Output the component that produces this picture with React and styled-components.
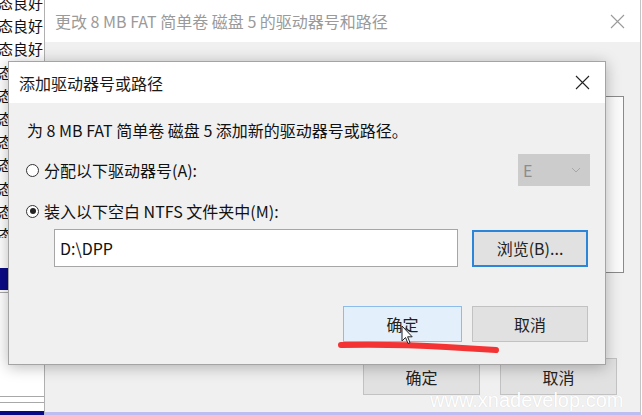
import React from 'react';
import styled, { createGlobalStyle } from 'styled-components';

const GlobalStyle = createGlobalStyle`
  html, body {
    margin: 0;
    padding: 0;
    background: #ffffff;
  }
  body {
    font-family: "Noto Sans CJK SC", "Noto Sans", sans-serif;
    color: #111;
  }
`;

// rows above the small dialog show fully, the rest only peek out on its left side
const topRows = Array.from({ length: 3 });
const coveredRows = Array.from({ length: 8 });

const App = () => {
  return (
    <>
      <GlobalStyle />
      <Desktop>
        <DiskList>
          <StatusRows>
            {topRows.map((_, i) => (
              <StatusCell key={i}>状态良好</StatusCell>
            ))}
            <CoveredRows>
              <CoveredInner>
                {coveredRows.map((_, i) => (
                  <StatusCell key={i}>状态良好</StatusCell>
                ))}
              </CoveredInner>
            </CoveredRows>
          </StatusRows>
          <SelectedBar />
          <RowLine />
          <ListFiller />
          <RowLine />
          <RowLine $gap={5} />
          <TaskBar />
        </DiskList>

        <OuterWindow>
          <TitleBar $height={42}>
            <OuterTitle>更改 8 MB FAT 简单卷 磁盘 5 的驱动器号和路径</OuterTitle>
            <CloseIcon color="#9a9a9a" />
          </TitleBar>
          <OuterBody>
            <PathList />
            <ButtonRow $gap={20}>
              <Button $w={117} $h={37}>确定</Button>
              <Button $w={117} $h={37}>取消</Button>
            </ButtonRow>
          </OuterBody>
        </OuterWindow>

        <Dialog>
          <TitleBar $height={41}>
            <DialogTitle>添加驱动器号或路径</DialogTitle>
            <CloseIcon color="#222" />
          </TitleBar>
          <DialogBody>
            <Description>为 8 MB FAT 简单卷 磁盘 5 添加新的驱动器号或路径。</Description>
            <OptionRow $top={13} $h={32}>
              <Radio />
              <OptionLabel>分配以下驱动器号(A):</OptionLabel>
              <DriveSelect>
                <span>E</span>
                <svg width="10" height="6" viewBox="0 0 10 6">
                  <path d="M1 1 L5 5 L9 1" fill="none" stroke="#a8a8a8" strokeWidth="1" />
                </svg>
              </DriveSelect>
            </OptionRow>
            <OptionRow $top={13} $h={24}>
              <Radio $checked />
              <OptionLabel>装入以下空白 NTFS 文件夹中(M):</OptionLabel>
            </OptionRow>
            <PathRow>
              <PathInput>{'D:\\DPP'}</PathInput>
              <Button $w={116} $h={37} $variant="focus">浏览(B)...</Button>
            </PathRow>
            <ButtonRow $gap={10} $top={39}>
              <Button $w={119} $h={36} $variant="hover">确定</Button>
              <Button $w={116} $h={36}>取消</Button>
            </ButtonRow>
          </DialogBody>
        </Dialog>

        <Underline width="170" height="16" viewBox="0 0 170 16">
          <path d="M5 5 Q60 4 110 7 T160 10" fill="none" stroke="#f43434" strokeWidth="6" strokeLinecap="round" />
        </Underline>

        <Cursor width="13" height="20" viewBox="0 0 13 20">
          <path d="M1 1 L1 16 L4.5 12.5 L7 18.5 L9 17.6 L6.6 11.8 L11.2 11.8 Z" fill="#fff" stroke="#222" strokeWidth="1" strokeLinejoin="round" />
        </Cursor>

        <Watermark>www.xnadevelop.com</Watermark>
      </Desktop>
    </>
  );
};

const CloseIcon = ({ color }) => (
  <svg width="15" height="15" viewBox="0 0 15 15">
    <path d="M1 1 L14 14 M14 1 L1 14" stroke={color} strokeWidth="1.1" fill="none" />
  </svg>
);

const Desktop = styled.div`
  position: relative;
  width: 642px;
  height: 415px;
  overflow: hidden;
  display: grid;
  grid-template-columns: 44px 598px;
  background: #ffffff;
`;

const DiskList = styled.div`
  display: flex;
  flex-direction: column;
  overflow: hidden;
  background: #ffffff;
`;

const StatusRows = styled.div`
  display: flex;
  flex-direction: column;
  height: 247px;
  margin-top: -9px;
  overflow: hidden;
`;

const CoveredRows = styled.div`
  width: 8px;
  overflow: hidden;
`;

const CoveredInner = styled.div`
  width: 44px;
  display: flex;
  flex-direction: column;
`;

const StatusCell = styled.div`
  flex: 0 0 23.2px;
  display: flex;
  justify-content: flex-end;
  align-items: center;
  padding-right: 1px;
  overflow: hidden;
  white-space: nowrap;
  font-size: 15px;
  line-height: 23px;
  color: #111;
`;

const SelectedBar = styled.div`
  height: 22px;
  margin-top: 30px;
  background: #0a0a86;
`;

const RowLine = styled.div`
  height: 1px;
  margin-top: ${p => p.$gap || 2}px;
  background: #a8a8a8;
`;

const ListFiller = styled.div`
  height: 101px;
`;

const TaskBar = styled.div`
  height: 4px;
  margin-top: auto;
  background: #0a0a86;
`;

const OuterWindow = styled.div`
  display: flex;
  flex-direction: column;
  box-sizing: border-box;
  height: 415px;
  width: 597px;
  border-left: 1px solid #b0b0b0;
  border-right: 1px solid #c4c4c4;
  border-bottom: 3px solid #bdbdf2;
  background: #f0f0f0;
`;

const TitleBar = styled.div`
  flex: 0 0 ${p => p.$height}px;
  display: flex;
  align-items: center;
  justify-content: space-between;
  padding: 0 15px 0 10px;
  background: #ffffff;
`;

const OuterTitle = styled.span`
  font-size: 16px;
  color: #9a9a9a;
`;

const OuterBody = styled.div`
  flex: 1;
  display: flex;
  flex-direction: column;
  padding-right: 16px;
`;

const PathList = styled.div`
  height: 177px;
  width: 560px;
  margin: 54px 0 0 auto;
  box-sizing: border-box;
  border: 1px solid #8a8a8a;
  background: #fbfbfb;
`;

const ButtonRow = styled.div`
  display: flex;
  justify-content: flex-end;
  gap: ${p => p.$gap}px;
  margin-top: ${p => p.$top || 85}px;
  padding-right: ${p => (p.$top ? 0 : 7)}px;
`;

const buttonColors = {
  normal: { bg: '#e1e1e1', border: '#c2c2c2' },
  focus: { bg: '#e1e1e1', border: '#2b86d9' },
  hover: { bg: '#e3f0fb', border: '#8cbdea' },
};

const Button = styled.div`
  box-sizing: border-box;
  width: ${p => p.$w}px;
  height: ${p => p.$h}px;
  display: flex;
  align-items: center;
  justify-content: center;
  font-size: 16px;
  color: #222;
  background: ${p => buttonColors[p.$variant || 'normal'].bg};
  border: ${p => (p.$variant === 'focus' ? 2 : 1)}px solid ${p => buttonColors[p.$variant || 'normal'].border};
`;

const Dialog = styled.div`
  position: absolute;
  left: 8px;
  top: 61px;
  width: 598px;
  height: 304px;
  box-sizing: border-box;
  display: flex;
  flex-direction: column;
  border: 1px solid #a4a4a4;
  background: #f0f0f0;
  box-shadow: 0 2px 14px rgba(0, 0, 0, 0.28);
`;

const DialogTitle = styled.span`
  font-size: 16px;
  color: #1a1a1a;
`;

const DialogBody = styled.div`
  flex: 1;
  display: flex;
  flex-direction: column;
  padding: 0 17px 0 17px;
`;

const Description = styled.div`
  margin-top: 16px;
  padding-left: 1px;
  font-size: 16px;
  line-height: 22px;
  color: #111;
`;

const OptionRow = styled.div`
  display: flex;
  align-items: center;
  height: ${p => p.$h}px;
  margin-top: ${p => p.$top}px;
`;

const Radio = styled.span`
  position: relative;
  box-sizing: border-box;
  width: 13px;
  height: 13px;
  border-radius: 50%;
  border: 1px solid #333;
  background: #fff;
  margin-right: 5px;
  &::after {
    content: '';
    display: ${p => (p.$checked ? 'block' : 'none')};
    position: absolute;
    left: 2.5px;
    top: 2.5px;
    width: 6px;
    height: 6px;
    border-radius: 50%;
    background: #222;
  }
`;

const OptionLabel = styled.span`
  font-size: 16px;
  line-height: 22px;
  color: #111;
`;

const DriveSelect = styled.div`
  box-sizing: border-box;
  width: 72px;
  height: 32px;
  margin-left: auto;
  margin-right: -2px;
  display: flex;
  align-items: center;
  justify-content: space-between;
  padding: 0 9px 0 5px;
  background: #cccccc;
  font-size: 16px;
  color: #8c8c8c;
`;

const PathRow = styled.div`
  display: flex;
  align-items: center;
  gap: 14px;
  margin-top: 6px;
  padding-left: 28px;
`;

const PathInput = styled.div`
  box-sizing: border-box;
  width: 404px;
  height: 38px;
  display: flex;
  align-items: center;
  padding-left: 5px;
  border: 1px solid #a6a6a6;
  background: #ffffff;
  font-size: 16px;
  color: #111;
`;

const Underline = styled.svg`
  position: absolute;
  left: 336px;
  top: 340px;
`;

const Cursor = styled.svg`
  position: absolute;
  left: 401px;
  top: 325px;
`;

const Watermark = styled.div`
  position: absolute;
  left: 430px;
  top: 388px;
  font-family: "Liberation Sans", Arial, sans-serif;
  font-size: 20px;
  line-height: 24px;
  color: #ffffff;
  text-shadow: 0 0 1px rgba(0, 0, 0, 0.12);
`;

export default App;
